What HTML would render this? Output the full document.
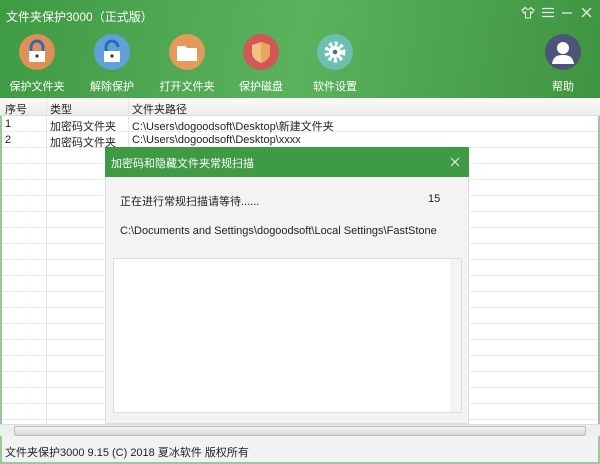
<!DOCTYPE html><html><head><meta charset="utf-8"><style>
body{margin:0;width:600px;height:464px;position:relative;overflow:hidden;font-family:"Liberation Sans","Noto Sans CJK SC",sans-serif;font-size:11px;background:#fff;color:#222}
.hd{position:absolute;left:0;top:0;width:600px;height:98px;background:linear-gradient(100deg,#3f9a44,#5bb25d 50%,#3e9440)}
.t{position:absolute;color:#fff;white-space:nowrap}
.ic{position:absolute;width:36px;height:36px;border-radius:50%;top:34px}
.lb{position:absolute;top:78px;color:#fff;font-size:11px;width:80px;text-align:center}
.grid{position:absolute;left:0;top:116px;width:600px;height:308px;background:repeating-linear-gradient(#fff 0 15px,#ececec 15px 16px);border-left:2px solid #9bc79c;border-right:2px solid #9bc79c;box-sizing:border-box}
.vl{position:absolute;top:98px;height:326px;width:1px;background:#e6e6e6}
.th{position:absolute;left:0;top:98px;width:600px;height:18px;background:linear-gradient(#fafafa,#ececec);border-bottom:1px solid #ddd;box-sizing:border-box}
.c{position:absolute;white-space:nowrap;font-size:11px}
</style></head><body>
<div class="hd"></div>
<div class="t" style="left:6px;top:8px;font-size:12px">文件夹保护3000（正式版）</div>
<svg style="position:absolute;left:521px;top:6px" width="14" height="13"><path d="M4.5 1.5L1 4l2 3 1.5-1v6h5V6l1.5 1 2-3-3.5-2.5c-.5 1.5-1.5 2-2.5 2s-2-.5-2.5-2z" fill="none" stroke="#e9f4e9" stroke-width="1.1"/></svg>
<svg style="position:absolute;left:542px;top:7px" width="12" height="11"><path d="M0 1.5h12M0 5.5h12M0 9.5h12" stroke="#e9f4e9" stroke-width="1.2"/></svg>
<svg style="position:absolute;left:562px;top:12px" width="10" height="2"><path d="M0 1h10" stroke="#e9f4e9" stroke-width="1.2"/></svg>
<svg style="position:absolute;left:581px;top:7px" width="11" height="11"><path d="M1 1l9 9M10 1l-9 9" stroke="#e9f4e9" stroke-width="1.3"/></svg>
<div class="ic" style="left:19px;background:#e08f55"><svg width="36" height="36"><path d="M12 17v-4a6 6 0 0 1 12 0v4" stroke="#2f6bb0" stroke-width="3" fill="none"/><rect x="10" y="17" width="16" height="11" fill="#fff"/><circle cx="18" cy="22" r="1.6" fill="#333"/></svg></div>
<div class="ic" style="left:94px;background:#5fa1d8"><svg width="36" height="36"><path d="M12 17v-4a6 6 0 0 1 12 0" stroke="#2f6bb0" stroke-width="3" fill="none"/><rect x="10" y="17" width="16" height="11" fill="#fff"/><circle cx="18" cy="22" r="1.6" fill="#333"/></svg></div>
<div class="ic" style="left:169px;background:#e39a5a"><svg width="36" height="36"><path d="M8 12h8l2 2h10v13H8z" fill="#fff"/></svg></div>
<div class="ic" style="left:243px;background:#d25757"><svg width="36" height="36"><path d="M18 8l9 3v7c0 6-4 9-9 11-5-2-9-5-9-11v-7z" fill="#f2c283"/><path d="M18 8l9 3v7c0 6-4 9-9 11z" fill="#e9a85f"/></svg></div>
<div class="ic" style="left:317px;background:#6cc0b1"><svg width="36" height="36"><circle cx="18" cy="18" r="8" fill="none" stroke="#fff" stroke-width="5" stroke-dasharray="3 2.3"/><circle cx="18" cy="18" r="6" fill="#fff"/><circle cx="18" cy="18" r="2.3" fill="#3a7f74"/></svg></div>
<div class="ic" style="left:545px;background:#4c5578"><svg width="36" height="36"><circle cx="18" cy="14" r="6" fill="#fff"/><path d="M7 30c1-7 5-9 11-9s10 2 11 9z" fill="#fff"/></svg></div>
<div class="lb" style="left:-3px">保护文件夹</div><div class="lb" style="left:72px">解除保护</div><div class="lb" style="left:147px">打开文件夹</div><div class="lb" style="left:221px">保护磁盘</div><div class="lb" style="left:295px">软件设置</div><div class="lb" style="left:523px">帮助</div>
<div class="grid"></div>
<div class="th"></div>
<div class="vl" style="left:46px"></div><div class="vl" style="left:128px"></div>
<div class="c" style="left:5px;top:101px">序号</div><div class="c" style="left:50px;top:101px">类型</div><div class="c" style="left:132px;top:101px">文件夹路径</div>
<div class="c" style="left:5px;top:118px">1</div><div class="c" style="left:50px;top:118px">加密码文件夹</div><div class="c" style="left:132px;top:118px">C:\Users\dogoodsoft\Desktop\新建文件夹</div>
<div class="c" style="left:5px;top:134px">2</div><div class="c" style="left:50px;top:134px">加密码文件夹</div><div class="c" style="left:132px;top:134px">C:\Users\dogoodsoft\Desktop\xxxx</div>
<div style="position:absolute;left:105px;top:147px;width:364px;height:277px;background:#f3f3f3;border:1px solid #ddd;box-sizing:border-box"></div>
<div style="position:absolute;left:105px;top:147px;width:364px;height:30px;background:#3f9a44"></div>
<div class="t" style="left:111px;top:155px;font-size:11px">加密码和隐藏文件夹常规扫描</div>
<svg style="position:absolute;left:450px;top:157px" width="10" height="10"><path d="M1 1l8 8M9 1l-8 8" stroke="#e8f3e8" stroke-width="1.2"/></svg>
<div class="c" style="left:120px;top:193px">正在进行常规扫描请等待......</div>
<div class="c" style="left:428px;top:193px">15</div>
<div class="c" style="left:120px;top:225px">C:\Documents and Settings\dogoodsoft\Local Settings\FastStone</div>
<div style="position:absolute;left:113px;top:258px;width:349px;height:155px;background:#fff;border:1px solid #ddd;box-sizing:border-box"></div>
<div style="position:absolute;left:450px;top:259px;width:11px;height:153px;background:#f4f4f4"></div>
<div style="position:absolute;left:0;top:424px;width:600px;height:12px;background:#eee;border-top:1px solid #ddd"></div>
<div style="position:absolute;left:14px;top:426px;width:570px;height:8px;background:linear-gradient(#f4f4f4,#d9d9d9);border:1px solid #bbb;border-radius:2px"></div>
<div style="position:absolute;left:0;top:436px;width:600px;height:28px;background:#f2f2f2;border-left:2px solid #9bc79c;border-right:2px solid #9bc79c;border-bottom:2px solid #9bc79c;box-sizing:border-box"></div>
<div class="c" style="left:5px;top:444px">文件夹保护3000 9.15 (C) 2018 夏冰软件 版权所有</div>
</body></html>
